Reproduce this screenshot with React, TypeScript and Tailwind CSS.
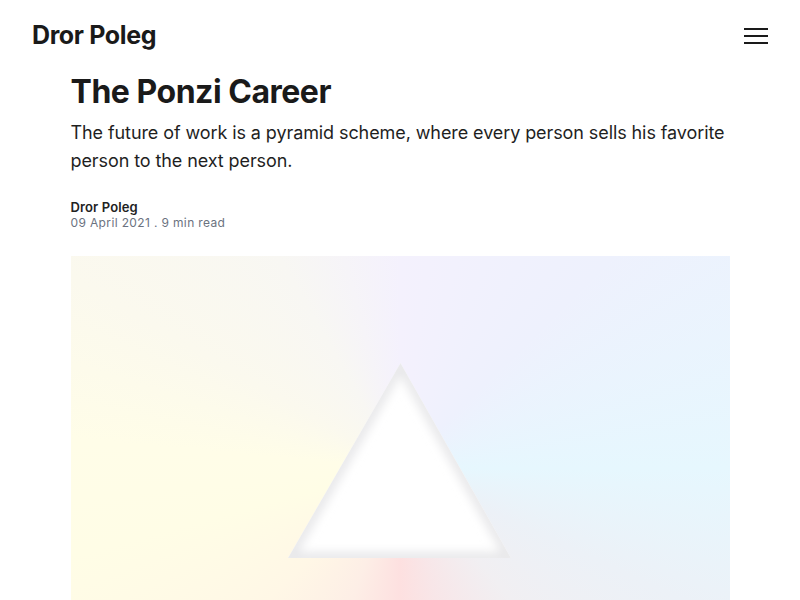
const font = { fontFamily: "Inter, 'Noto Sans', sans-serif" };

function Prism() {
    // white triangle with a soft inner shadow along its edges
    return (
        <svg className="absolute inset-0" width="659" height="400" viewBox="0 0 659 400">
            <defs>
                <clipPath id="tri">
                    <polygon points="329.5,107 217,302 440,302" />
                </clipPath>
                <filter id="blur" x="-20%" y="-20%" width="140%" height="140%">
                    <feGaussianBlur stdDeviation="5" />
                </filter>
            </defs>
            <polygon points="329.5,107 217,302 440,302" fill="#ffffff" />
            <g clipPath="url(#tri)">
                <polygon points="329.5,107 217,302 440,302" fill="none" stroke="#e8e8ea" strokeWidth="12" filter="url(#blur)" />
            </g>
        </svg>
    );
}

export default function App() {
    return (
        <div className="h-screen overflow-hidden bg-white text-[#1a1a1a]" style={font}>
            <header className="flex h-[72px] items-center justify-between px-8">
                <div className="text-[25px] font-bold tracking-[-0.015em]">Dror Poleg</div>
                <button className="flex h-6 w-6 flex-col justify-center gap-[5px]">
                    <span className="block h-[2px] w-6 bg-[#1a1a1a]" />
                    <span className="block h-[2px] w-6 bg-[#1a1a1a]" />
                    <span className="block h-[2px] w-6 bg-[#1a1a1a]" />
                </button>
            </header>

            <article className="mx-auto w-[659px]">
                <h1 className="text-[32px] font-bold leading-[40px] tracking-[-0.015em]">The Ponzi Career</h1>
                <p className="mt-[7px] text-[18px] leading-[28px] tracking-[-0.005em] text-[#1f1f1f]">
                    The future of work is a pyramid scheme, where every person sells his favorite person to the next person.
                </p>
                <div className="mt-6 leading-4">
                    <div className="text-[13px] font-semibold tracking-[0.01em] text-[#222]">Dror Poleg</div>
                    <div className="text-[12px] tracking-[0.03em] text-[#6b7280]">09 April 2021 . 9 min read</div>
                </div>

                <div className="relative mt-[25px] h-[400px] w-[659px] bg-[conic-gradient(from_0deg_at_50%_53%,#f4f1fd_0deg,#eef1fd_45deg,#e6f7fe_90deg,#ecf1f7_115deg,#f1eff2_140deg,#f8e6e8_165deg,#fde0e0_180deg,#fdeee6_200deg,#fff7e6_225deg,#fffde6_255deg,#fffde8_275deg,#fbf9ee_300deg,#f8f7f3_330deg,#f4f1fd_360deg)]">
                    <Prism />
                </div>
            </article>
        </div>
    );
}
